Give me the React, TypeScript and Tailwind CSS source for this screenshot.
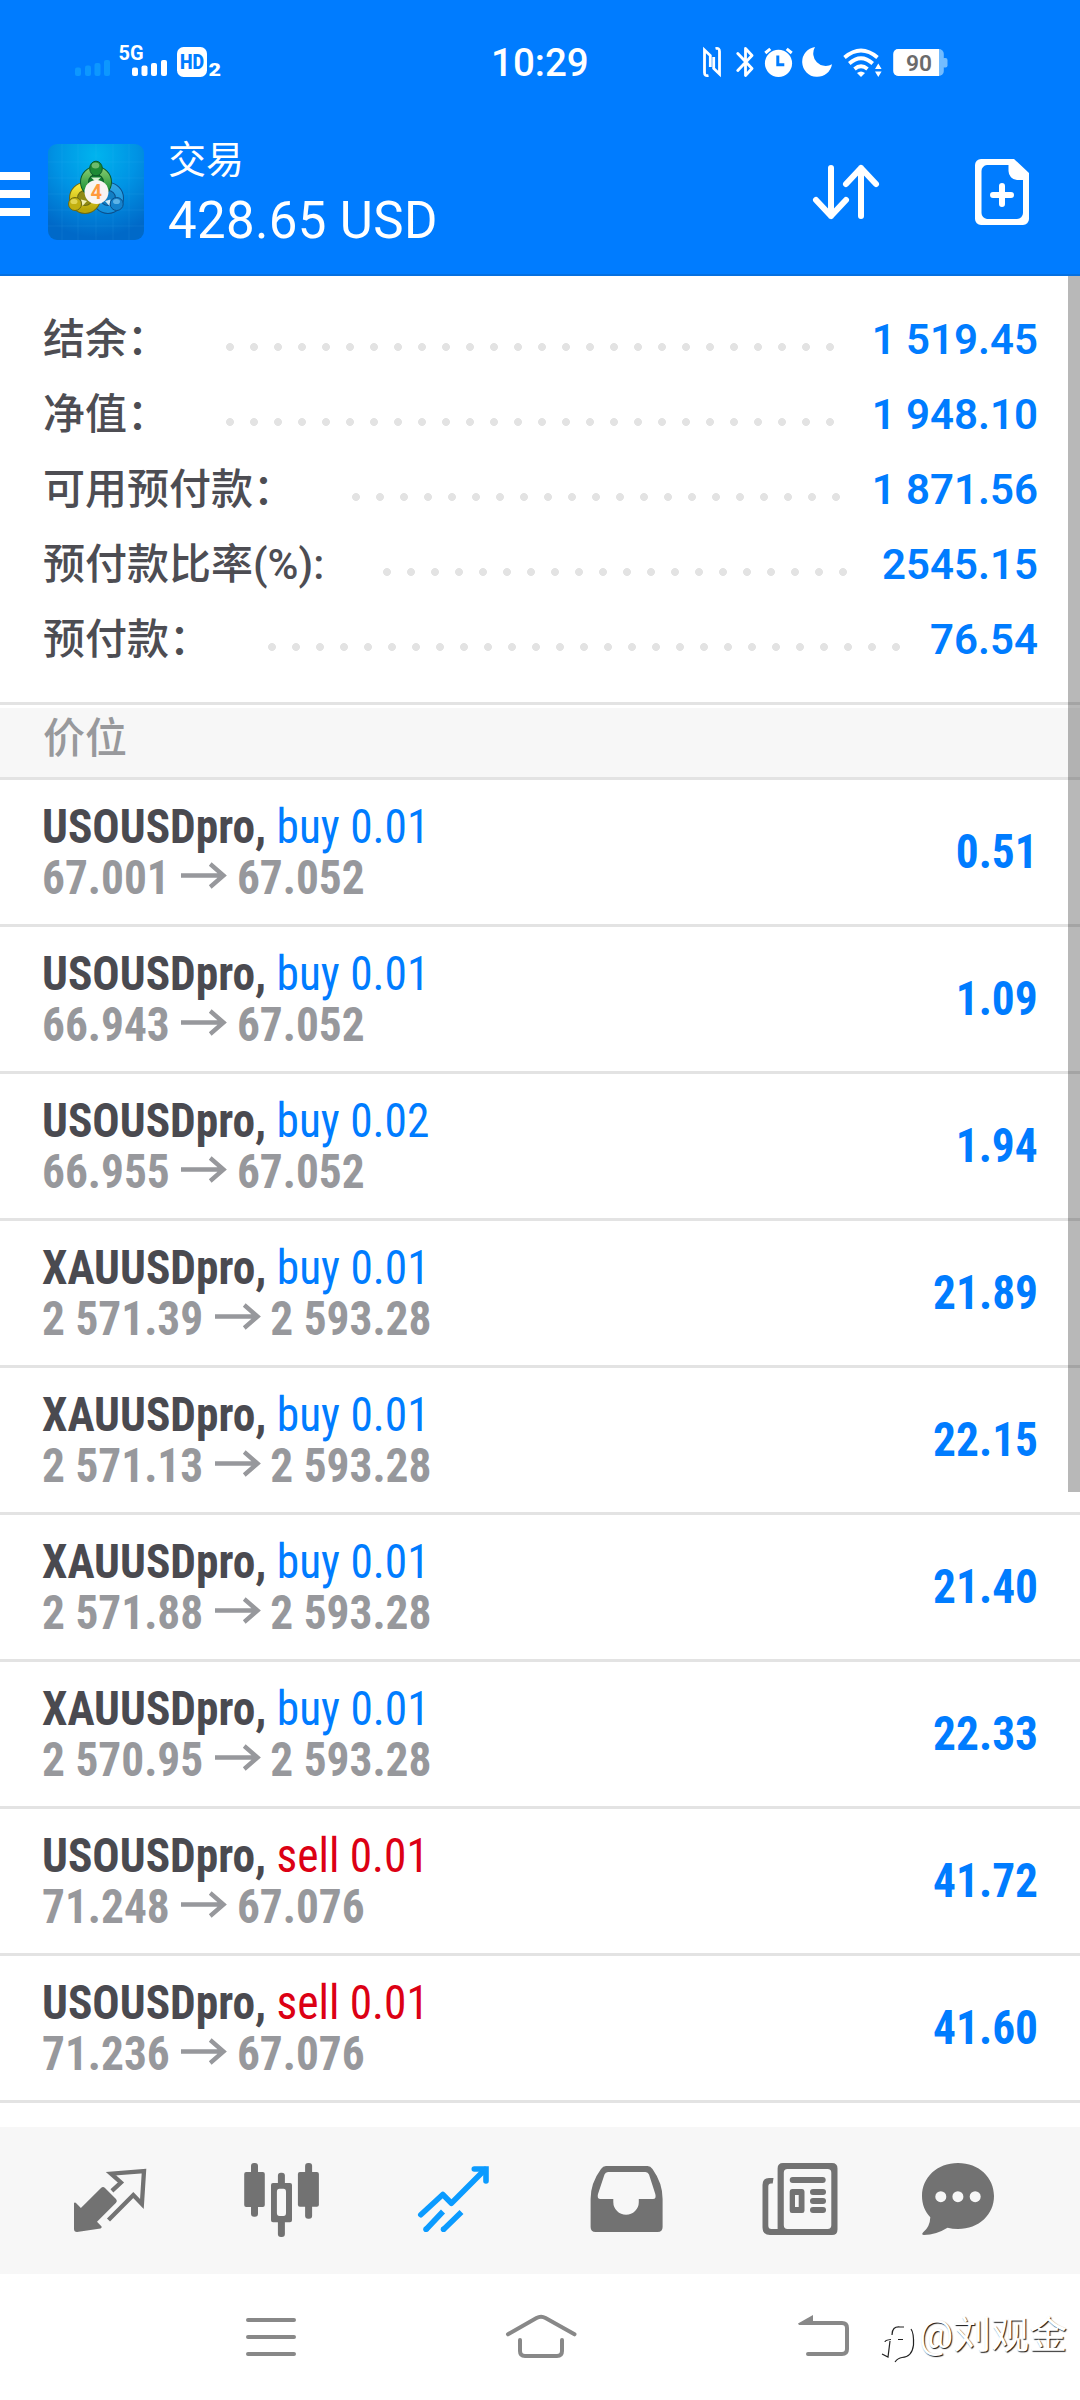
import React from "react";

type StatRow = {
  label: string;
  value: string;
  labelWidth: string;
  dotsWidth: string;
};

type Position = {
  symbol: string;
  side: "buy" | "sell";
  volume: string;
  open: string;
  current: string;
  profit: string;
};

const STATS: StatRow[] = [
  { label: "结余：", value: "1 519.45", labelWidth: "w-[175px]", dotsWidth: "w-[624px]" },
  { label: "净值：", value: "1 948.10", labelWidth: "w-[175px]", dotsWidth: "w-[624px]" },
  { label: "可用预付款：", value: "1 871.56", labelWidth: "w-[301px]", dotsWidth: "w-[504px]" },
  { label: "预付款比率(%):", value: "2545.15", labelWidth: "w-[332px]", dotsWidth: "w-[480px]" },
  { label: "预付款：", value: "76.54", labelWidth: "w-[217px]", dotsWidth: "w-[648px]" },
];

const POSITIONS: Position[] = [
  { symbol: "USOUSDpro", side: "buy", volume: "0.01", open: "67.001", current: "67.052", profit: "0.51" },
  { symbol: "USOUSDpro", side: "buy", volume: "0.01", open: "66.943", current: "67.052", profit: "1.09" },
  { symbol: "USOUSDpro", side: "buy", volume: "0.02", open: "66.955", current: "67.052", profit: "1.94" },
  { symbol: "XAUUSDpro", side: "buy", volume: "0.01", open: "2 571.39", current: "2 593.28", profit: "21.89" },
  { symbol: "XAUUSDpro", side: "buy", volume: "0.01", open: "2 571.13", current: "2 593.28", profit: "22.15" },
  { symbol: "XAUUSDpro", side: "buy", volume: "0.01", open: "2 571.88", current: "2 593.28", profit: "21.40" },
  { symbol: "XAUUSDpro", side: "buy", volume: "0.01", open: "2 570.95", current: "2 593.28", profit: "22.33" },
  { symbol: "USOUSDpro", side: "sell", volume: "0.01", open: "71.248", current: "67.076", profit: "41.72" },
  { symbol: "USOUSDpro", side: "sell", volume: "0.01", open: "71.236", current: "67.076", profit: "41.60" },
];

function StatusBar() {
  return (
    <div className="grid h-[108px] grid-cols-[491px_211px_1fr] pt-[36px]">
      <div className="flex pl-[75px]">
        <svg width="35" height="52" viewBox="75 36 35 52" fill="#0d97ff">
          <rect x="75" y="67.5" width="6" height="8.5" rx="2" />
          <rect x="85" y="65.5" width="6" height="10.5" rx="2" />
          <rect x="94.5" y="63" width="6" height="13" rx="2" />
          <rect x="104" y="60" width="6" height="16" rx="2" />
        </svg>
        <svg className="ml-[8px]" width="50" height="52" viewBox="118 36 50 52" fill="#fff">
          <text x="118.5" y="60" fontSize="20" fontWeight="700" fontFamily="Roboto, sans-serif" textLength="25" lengthAdjust="spacingAndGlyphs">5G</text>
          <rect x="132" y="67.5" width="6" height="8.5" rx="2" />
          <rect x="141.5" y="65.5" width="6" height="10.5" rx="2" />
          <rect x="151" y="63" width="6" height="13" rx="2" />
          <rect x="161" y="60" width="6" height="16" rx="2" />
        </svg>
        <svg className="ml-[9px]" width="46" height="52" viewBox="177 36 46 52">
          <rect x="177" y="47" width="30" height="30" rx="6.5" fill="#fff" />
          <text x="180" y="69" fontSize="20" fontWeight="900" fill="#007cff" fontFamily="Roboto, sans-serif" textLength="24" lengthAdjust="spacingAndGlyphs">HD</text>
          <text x="208.5" y="76" fontSize="17.5" fontWeight="900" fill="#fff" fontFamily="Roboto, sans-serif" textLength="12.5" lengthAdjust="spacingAndGlyphs">2</text>
        </svg>
      </div>
      <div className="text-[38.5px] leading-[53px] font-medium text-white">10:29</div>
      <div className="flex">
        <svg width="20" height="52" viewBox="12 0 20 52" fill="none" stroke="#fff" strokeWidth="2.8">
          <path d="M18.5 39.5 Q14.5 40.5 14.5 36.5 V14 L20.3 19.5 V31" />
          <path d="M25.5 12.5 Q29.5 11.5 29.5 15.5 V38 L23.7 32.5 V21" />
        </svg>
        <svg className="ml-[14px]" width="18" height="52" viewBox="46 0 18 52" fill="none" stroke="#fff" strokeWidth="2.8" strokeLinejoin="round" strokeLinecap="round">
          <path d="M47.8 17.5 L62 32.5 L55.5 39.5 V12.5 L62 19.5 L47.8 34.5" />
        </svg>
        <svg className="ml-[10px]" width="29" height="52" viewBox="73.5 0 29 52" fill="none" stroke="#fff">
          <circle cx="88" cy="27.3" r="13.6" fill="#fff" stroke="none" />
          <path d="M74.8 17 L79.8 12.8 M101.2 17 L96.2 12.8" strokeWidth="3" />
          <path d="M87.3 19.5 V28.8 H93.8" stroke="#007cff" strokeWidth="3" />
        </svg>
        <svg className="ml-[9px]" width="30" height="52" viewBox="112 0 30 52" fill="#fff">
          <path d="M125 11 A15 15 0 1 0 142 28.2 A12.5 12.5 0 0 1 125 11Z" />
        </svg>
        <svg className="ml-[11px]" width="40" height="52" viewBox="153 0 40 52" fill="none" stroke="#fff" strokeWidth="3.8">
          <path d="M154.5 21.5 Q171 7.5 187.5 21.5" />
          <path d="M159.3 27.5 Q171 17 182.7 27.5" />
          <path d="M164.5 33 Q171 27.5 177.5 33" />
          <path d="M167 37 Q171 34 175 37 L171 41Z" fill="#fff" stroke="none" />
          <path d="M188.3 27.5 L191.6 33 H185Z M188.3 41 L191.6 35.5 H185Z" fill="#fff" stroke="none" />
        </svg>
        <svg className="ml-[10px]" width="55" height="52" viewBox="203 0 55 52">
          <rect x="203.3" y="13" width="50.5" height="27" rx="5" fill="#73bcff" />
          <rect x="252" y="22" width="5.5" height="9.5" rx="2" fill="#73bcff" />
          <path d="M208.3 13 H249 V40 H208.3 A5 5 0 0 1 203.3 35 V18 A5 5 0 0 1 208.3 13Z" fill="#fff" />
          <text x="216" y="34.5" fontSize="22" fontWeight="600" fill="#6b6b6b" fontFamily="Roboto, sans-serif" textLength="26" lengthAdjust="spacingAndGlyphs">90</text>
        </svg>
      </div>
    </div>
  );
}

function Logo() {
  return (
    <svg width="96" height="96" viewBox="0 0 96 96">
      <defs>
        <radialGradient id="sky" cx="50%" cy="12%" r="85%">
          <stop offset="0" stopColor="#00b4ee" />
          <stop offset="0.5" stopColor="#0093e4" />
          <stop offset="1" stopColor="#0069c8" />
        </radialGradient>
        <linearGradient id="leaf" x1="0" y1="0" x2="0" y2="1">
          <stop offset="0" stopColor="#7cc66a" />
          <stop offset="1" stopColor="#0e8a30" />
        </linearGradient>
        <linearGradient id="gold" x1="0" y1="0" x2="0" y2="1">
          <stop offset="0" stopColor="#f4e63a" />
          <stop offset="1" stopColor="#b9a60a" />
        </linearGradient>
        <linearGradient id="sea" x1="0" y1="0" x2="0" y2="1">
          <stop offset="0" stopColor="#2fa4e2" />
          <stop offset="1" stopColor="#1590dc" />
        </linearGradient>
      </defs>
      <rect width="96" height="96" rx="9" fill="url(#sky)" />
      <path
        d="M0 18H96M0 34H96M0 50H96M0 66H96M0 82H96M14 0V96M30 0V96M48 0V96M65 0V96M81 0V96"
        stroke="#5cc8ff"
        strokeOpacity="0.1"
        fill="none"
      />
      <circle cx="60" cy="54" r="11.5" fill="#127fc4" stroke="#0b4f8c" strokeWidth="9" />
      <circle cx="60" cy="54" r="11.5" fill="none" stroke="url(#sea)" strokeWidth="7" />
      <circle cx="37" cy="54" r="11.5" fill="#8f8a14" stroke="#6d6a12" strokeWidth="9" />
      <circle cx="37" cy="54" r="11.5" fill="none" stroke="url(#gold)" strokeWidth="7" />
      <circle cx="48" cy="38" r="11.5" fill="#0f7a2e" stroke="#0b5a2a" strokeWidth="9" />
      <circle cx="48" cy="38" r="11.5" fill="none" stroke="url(#leaf)" strokeWidth="7" />
      <path d="M43 33.5 L48 38 L53 33.5Z" fill="#d5f3d2" />
      <path d="M33 55.5 L39 57 L34.5 62Z" fill="#f3efb4" />
      <path d="M62.5 55.5 L57 57 L61.5 62Z" fill="#cdeaf7" />
      <ellipse cx="48" cy="24.5" rx="6.3" ry="7.3" fill="#1c8a35" stroke="#0b5a2a" />
      <ellipse cx="47.5" cy="21.5" rx="3.8" ry="3" fill="#8fce86" opacity="0.7" />
      <circle cx="27" cy="60" r="6.5" fill="#c2b010" stroke="#6d6a12" />
      <ellipse cx="26" cy="57.5" rx="3.5" ry="2.6" fill="#efe66e" opacity="0.7" />
      <circle cx="68.7" cy="60" r="6.5" fill="#1682cc" stroke="#0b4f8c" />
      <ellipse cx="68.5" cy="57.5" rx="3.5" ry="2.6" fill="#7cc8f2" opacity="0.7" />
      <circle cx="48.5" cy="48" r="12" fill="#f8f4f2" />
      <text x="42.5" y="55.3" fontSize="20" fontWeight="700" fill="#ff9a3c" fontFamily="Roboto, sans-serif">4</text>
    </svg>
  );
}

function AppBar() {
  return (
    <div className="flex h-[166px]">
      <svg className="mt-[64px]" width="30" height="44" viewBox="0 0 30 44" fill="#fff">
        <rect width="30" height="8" />
        <rect y="18" width="30" height="8" />
        <rect y="36" width="30" height="8" />
      </svg>
      <div className="ml-[18px] mt-[36px]">
        <Logo />
      </div>
      <div className="ml-[24px] pt-[24px] text-white">
        <div className="text-[38px] leading-[56px]">交易</div>
        <div className="text-[51px] leading-[66px] tracking-[0.35px]">428.65 USD</div>
      </div>
      <svg className="ml-auto mt-[51px]" width="72" height="66" viewBox="0 0 72 66" fill="none" stroke="#fff" strokeWidth="6" strokeLinecap="round" strokeLinejoin="round">
        <path d="M21 9 V57 M6 41 L21 57 L36 41" />
        <path d="M51 57 V9 M36 25 L51 9 L66 25" />
      </svg>
      <svg className="ml-[93px] mr-[51px] mt-[51px]" width="54" height="66" viewBox="0 0 54 66">
        <path
          d="M6 0 H39 L54 14 V60 A6 6 0 0 1 48 66 H6 A6 6 0 0 1 0 60 V6 A6 6 0 0 1 6 0Z M12 6 A6 6 0 0 0 6.5 12 V54 A6 6 0 0 0 12 60 H42 A6 6 0 0 0 48 54 V21 H42 A9 9 0 0 1 33.5 12 V6Z"
          fill="#fff"
          fillRule="evenodd"
        />
        <path d="M27 27 V45 M18 36 H36" stroke="#fff" strokeWidth="6" strokeLinecap="round" />
      </svg>
    </div>
  );
}

function StatLine({ label, value, labelWidth, dotsWidth }: StatRow) {
  return (
    <div className="flex h-[75px] text-[42px] leading-[75px]">
      <span className={`shrink-0 whitespace-nowrap font-medium text-[#4d4d53] ${labelWidth}`}>{label}</span>
      <span
        className={`mt-[33px] h-[24px] shrink-0 bg-[radial-gradient(circle,#e3e3e3_3.6px,transparent_4.3px)] bg-[length:24px_24px] ${dotsWidth}`}
      />
      <span className="ml-auto whitespace-nowrap font-semibold text-[#007cff]">{value}</span>
    </div>
  );
}

function PositionRow({ symbol, side, volume, open, current, profit }: Position) {
  return (
    <div className="flex h-[147px] items-center justify-between border-b-[3px] border-[#e3e3e3] pr-[42px] pl-[42px] font-['Roboto_Condensed','Roboto',sans-serif] text-[48px] leading-[51px]">
      <div className="origin-left scale-x-[0.945] whitespace-nowrap">
        <div>
          <span className="font-bold text-[#4a4a50]">{symbol}, </span>
          <span className={side === "buy" ? "text-[#007cff]" : "text-[#dc0014]"}>
            {side} {volume}
          </span>
        </div>
        <div className="flex font-bold text-[#97989c]">
          <span>{open}</span>
          <svg className="mr-[10px] ml-[12px] mt-[8px]" width="49" height="30" viewBox="0 0 49 30" fill="none" stroke="#97989c" strokeWidth="4.600">
            <path d="M0 15.5 H46 M31 4 L45 15.5 L31 27" />
          </svg>
          <span>{current}</span>
        </div>
      </div>
      <div className="origin-right scale-x-[0.945] pb-[2px] font-bold text-[#007cff]">{profit}</div>
    </div>
  );
}

function TabBar() {
  return (
    <div className="grid h-[147px] grid-cols-[172px_172px_173px_173px_158px_80px] bg-[#f7f7f7] pt-[34px] pl-[70px]">
      <svg width="80" height="80" viewBox="0 0 80 80">
        <path d="M4 42 Q5 40.8 6.5 42.5 L10.9 47 L31 27 Q33 25 35 27 L46 38 Q47.8 40 46 41.8 L27 60.7 L31.6 65.5 Q32 67 30.5 67.5 L7 71 Q4 71 4 68Z" fill="#727272" />
        <path d="M41.9 29.8 L50.9 21.5 L41 12.7 L74 10 L71.9 43 L63.3 34 L38.5 59" fill="none" stroke="#727272" strokeWidth="4.3" />
      </svg>
      <svg width="80" height="80" viewBox="0 0 80 80" fill="#727272">
        <rect x="9" y="2" width="7" height="53.7" rx="3" />
        <rect x="2.2" y="11" width="20.6" height="35" rx="2" />
        <rect x="35.9" y="11.7" width="7" height="14" rx="3" />
        <rect x="35.9" y="58" width="7" height="18" rx="3" />
        <path d="M31 22 H48 Q50 22 50 24 V59.3 Q50 61.3 48 61.3 H31 Q29 61.3 29 59.3 V24 Q29 22 31 22Z M37.5 27.7 Q34.9 27.7 34.9 31 V52 Q34.9 55 37.5 55 H41.5 Q44 55 44 52 V31 Q44 27.7 41.5 27.7Z" fillRule="evenodd" />
        <rect x="63.1" y="2" width="7" height="55.7" rx="3" />
        <rect x="55.9" y="11" width="21" height="34.7" rx="2" />
      </svg>
      <svg width="80" height="80" viewBox="0 0 80 80" fill="none" stroke="#0b9bff" strokeWidth="5.6">
        <path d="M6.8 53.7 L28.8 33.5 L37.4 42.3 L71 8.5" strokeLinecap="round" strokeLinejoin="round" />
        <path d="M60.3 8 H72 V20" strokeLinecap="round" />
        <path d="M12 68.5 L29 50.5 M29.5 68.5 L47.5 51" />
        <circle cx="12" cy="68.3" r="2.8" fill="#0b9bff" stroke="none" />
        <circle cx="29.5" cy="68.3" r="2.8" fill="#0b9bff" stroke="none" />
      </svg>
      <svg width="80" height="80" viewBox="0 0 80 80">
        <path
          d="M19 5 H60.500 Q63.500 5 65.500 8 Q75.600 22 75.600 38 V66 Q75.600 71 70.600 71 H8.600 Q3.600 71 3.600 66 V38 Q3.600 22 14 8 Q16 5 19 5Z M21 11 Q18.500 11 17.500 13.500 L11 33 Q9.700 38 13.500 38 H26.300 V41 A12.700 12.700 0 0 0 51.800 41 V38 H66 Q69.600 38 68.300 33 L62 13.500 Q61 11 58.500 11Z"
          fill="#727272"
          fillRule="evenodd"
        />
      </svg>
      <svg width="80" height="80" viewBox="0 0 80 80" fill="#727272">
        <path
          d="M23 2 H72 Q77.5 2 77.5 7.5 V68.5 Q77.5 74 72 74 H10 Q2.5 74 2.5 66.5 V24 Q2.5 17 9 17 H13.5 L12.7 22.5 H11 Q8.3 22.5 8.3 25.5 V64.5 Q8.3 68 11.5 68 H17.6 V7.5 Q17.6 2 23 2Z M27.5 8 Q23.8 8 23.8 11.7 V64.3 Q23.8 68 27.5 68 H67.6 Q71.3 68 71.3 64.3 V11.7 Q71.3 8 67.6 8Z"
          fillRule="evenodd"
        />
        <rect x="29.7" y="16" width="36" height="6" rx="3" />
        <path d="M32 28 H42.2 Q44.5 28 44.5 30.5 V49.5 Q44.5 52 42.2 52 H32 Q29.7 52 29.7 49.5 V30.5 Q29.7 28 32 28Z M35 34 V46 H38.7 V34Z" fillRule="evenodd" />
        <rect x="50" y="28" width="16" height="6" rx="3" />
        <rect x="50" y="37" width="16" height="6" rx="3" />
        <rect x="50" y="46" width="16" height="6" rx="3" />
      </svg>
      <svg width="80" height="80" viewBox="0 0 80 80">
        <path
          d="M40 2 C61 2 76 16.5 76 35 C76 53.5 61 68 40 68 Q34.5 68 29.5 66.8 Q18 74 6 74 Q3 73.5 5 71.5 Q12 66 12.3 56.3 C7 50.5 4 43.5 4 35 C4 16.5 19 2 40 2Z"
          fill="#727272"
        />
        <g fill="#f7f7f7">
          <circle cx="22.8" cy="35.7" r="5.5" />
          <circle cx="39.9" cy="35.7" r="5.5" />
          <circle cx="57.2" cy="35.7" r="5.5" />
        </g>
      </svg>
    </div>
  );
}

function NavBar() {
  return (
    <div className="flex h-[126px] pt-[34px]">
      <svg className="ml-[240px]" width="60" height="60" viewBox="240 2308 60 60" stroke="#888" strokeWidth="4" strokeLinecap="round">
        <path d="M248 2320H294M248 2337H294M248 2354H294" />
      </svg>
      <svg className="ml-[200px]" width="82" height="60" viewBox="500 2308 82 60" fill="none" stroke="#888" strokeWidth="4" strokeLinecap="round">
        <path d="M508 2334.3 L536.5 2318 Q541 2315.5 545.5 2318 L574.5 2334.3" />
        <path d="M520 2340 V2351 Q520 2356 525 2356 H557 Q562 2356 562 2351 V2340" />
      </svg>
      <svg className="ml-[211px]" width="60" height="60" viewBox="793 2308 60 60" fill="none" stroke="#888" strokeWidth="4" strokeLinecap="round">
        <path d="M811 2323 H842 Q847 2323 847 2328 V2349 Q847 2354 842 2354 H808" />
        <path d="M798 2323.5 L813 2315 V2325 H799Z" fill="#888" stroke="none" />
      </svg>
      <svg className="ml-[25px] shrink-0" width="41" height="60" viewBox="878 2308 41 60" fill="none" stroke="#222" strokeWidth="1.2">
        <path d="M892 2335 Q892 2326 900 2327 H904" />
        <path d="M885 2342 Q885 2340 891 2339.5 M898 2339.5 H903 M890 2341 L888 2357 L882 2354" />
        <path d="M911 2329 Q914 2333 913.5 2345 Q912 2357 902 2357.5 Q898 2358 895 2362" />
      </svg>
      <div className="pt-[2px] text-[38px] leading-[50px] font-normal whitespace-nowrap text-white [text-shadow:1px_1px_1px_#111]">
        @刘观金
      </div>
    </div>
  );
}

export default function App() {
  return (
    <div className="relative flex h-[2400px] w-[1080px] flex-col overflow-hidden bg-white font-['Roboto','Noto_Sans_CJK_SC',sans-serif]">
      <header className="h-[276px] border-b-2 border-[#0670e0] bg-[#007cff]">
        <StatusBar />
        <AppBar />
      </header>

      <section className="h-[429px] border-b-[3px] border-[#e3e3e3] pt-[26px] pr-[42px] pl-[43px]">
        {STATS.map((row) => (
          <StatLine key={row.label} {...row} />
        ))}
      </section>

      <div className="mt-[3px] h-[72px] border-b-[3px] border-[#e3e3e3] bg-[#f7f7f7] pl-[43px] text-[42px] leading-[61px] font-medium text-[#98999c]">
        价位
      </div>

      <main className="h-[1347px] shrink-0">
        {POSITIONS.map((position, index) => (
          <PositionRow key={index} {...position} />
        ))}
      </main>

      <TabBar />
      <NavBar />

      {/* scroll thumb */}
      <div className="absolute top-[276px] right-0 h-[1216px] w-[12px] bg-black/28" />
    </div>
  );
}
